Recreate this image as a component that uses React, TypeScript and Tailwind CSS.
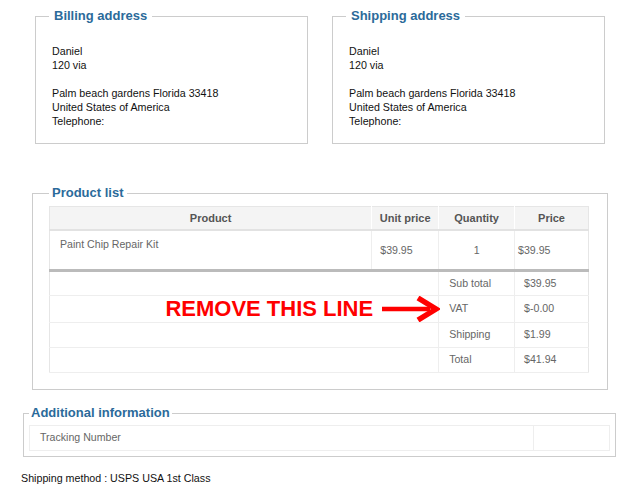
const legend = 'text-[13px] font-bold leading-[16px] text-[#2b6a9a]';

function Address({ title }: { title: string }) {
  return (
    <fieldset className="w-[273px] h-[136px] border border-[#cccccc]">
      <legend className={`${legend} ml-[13px] px-[5px]`}>{title}</legend>
      <div className="pl-[16px] pt-[20px] text-[10.7px] leading-[14px] text-[#111]">
        <div>Daniel</div>
        <div>120 via</div>
        <div className="h-[14px]" />
        <div>Palm beach gardens Florida 33418</div>
        <div>United States of America</div>
        <div>Telephone:</div>
      </div>
    </fieldset>
  );
}

function Arrow() {
  return (
    <svg width="58" height="26" viewBox="0 0 58 26" className="-mr-[2px] shrink-0">
      <line x1="0" y1="13" x2="48" y2="13" stroke="#ff0000" strokeWidth="4.5" />
      <polyline points="36,2 54,13 36,24" fill="none" stroke="#ff0000" strokeWidth="5.5" strokeLinejoin="miter" />
    </svg>
  );
}

const totals = [
  { label: 'Sub total', value: '$39.95' },
  { label: 'VAT', value: '$-0.00', note: true },
  { label: 'Shipping', value: '$1.99' },
  { label: 'Total', value: '$41.94' },
];

export default function App() {
  return (
    <div className="w-[628px] h-[490px] bg-white font-['Liberation_Sans',Arial,sans-serif] text-[12px]">
      <div className="flex gap-[24px] pl-[35px] pt-[8px]">
        <Address title="Billing address" />
        <Address title="Shipping address" />
      </div>

      <fieldset className="ml-[32px] mt-[41px] w-[576px] border border-[#cccccc] pb-[16px]">
        <legend className={`${legend} ml-[16px] px-[3px]`}>Product list</legend>
        <table className="ml-[16px] mt-[5px] w-[540px] border-collapse border border-[#e6e6e6] text-[10.6px] text-[#666]">
          <thead>
            <tr className="bg-[#f4f4f4] text-[11px] text-[#555] font-bold h-[23px]">
              <th className="w-[323px] border-r border-white border-b-2 border-b-[#e2e2e2]">Product</th>
              <th className="w-[67px] border-r border-white border-b-2 border-b-[#e2e2e2]">Unit price</th>
              <th className="w-[76px] border-r border-white border-b-2 border-b-[#e2e2e2]">Quantity</th>
              <th className="w-[74px] border-b-2 border-b-[#e2e2e2]">Price</th>
            </tr>
          </thead>
          <tbody>
            <tr className="h-[41px]">
              <td className="align-top pl-[10px] pt-[6px] border-r border-[#eeeeee] border-b-[3px] border-b-[#bbbbbb]">Paint Chip Repair Kit</td>
              <td className="pl-[8px] pt-[2px] border-r border-[#eeeeee] border-b-[3px] border-b-[#bbbbbb]">$39.95</td>
              <td className="text-center pt-[2px] border-r border-[#eeeeee] border-b-[3px] border-b-[#bbbbbb]">1</td>
              <td className="pl-[3px] pt-[2px] border-b-[3px] border-b-[#bbbbbb]">$39.95</td>
            </tr>
            {totals.map((t) => (
              <tr key={t.label} className="h-[25px]">
                <td colSpan={2} className="p-0 border-r border-b border-[#eeeeee]">
                  {t.note && (
                    <div className="flex items-center justify-end gap-[9px]">
                      <span className="text-[22px] font-bold leading-[24px] tracking-[0px] text-[#ff0000]">REMOVE THIS LINE</span>
                      <Arrow />
                    </div>
                  )}
                </td>
                <td className="pl-[10px] border-r border-b border-[#eeeeee]">{t.label}</td>
                <td className="pl-[9px] border-b border-[#eeeeee]">{t.value}</td>
              </tr>
            ))}
          </tbody>
        </table>
      </fieldset>

      <fieldset className="ml-[23px] mt-[15px] w-[593px] border border-[#cccccc] px-[5px] pb-[5px]">
        <legend className={`${legend} ml-0 px-[2px]`}>Additional information</legend>
        <table className="mt-[4px] w-full border-collapse border border-[#eeeeee] text-[10.6px] text-[#666]">
          <tbody>
            <tr className="h-[25px]">
              <td className="pl-[10px] border-r border-[#eeeeee]">Tracking Number</td>
              <td className="w-[76px]" />
            </tr>
          </tbody>
        </table>
      </fieldset>

      <div className="mt-[14px] pl-[21px] text-[10.7px] leading-[14px] text-[#111]">Shipping method : USPS USA 1st Class</div>
    </div>
  );
}
